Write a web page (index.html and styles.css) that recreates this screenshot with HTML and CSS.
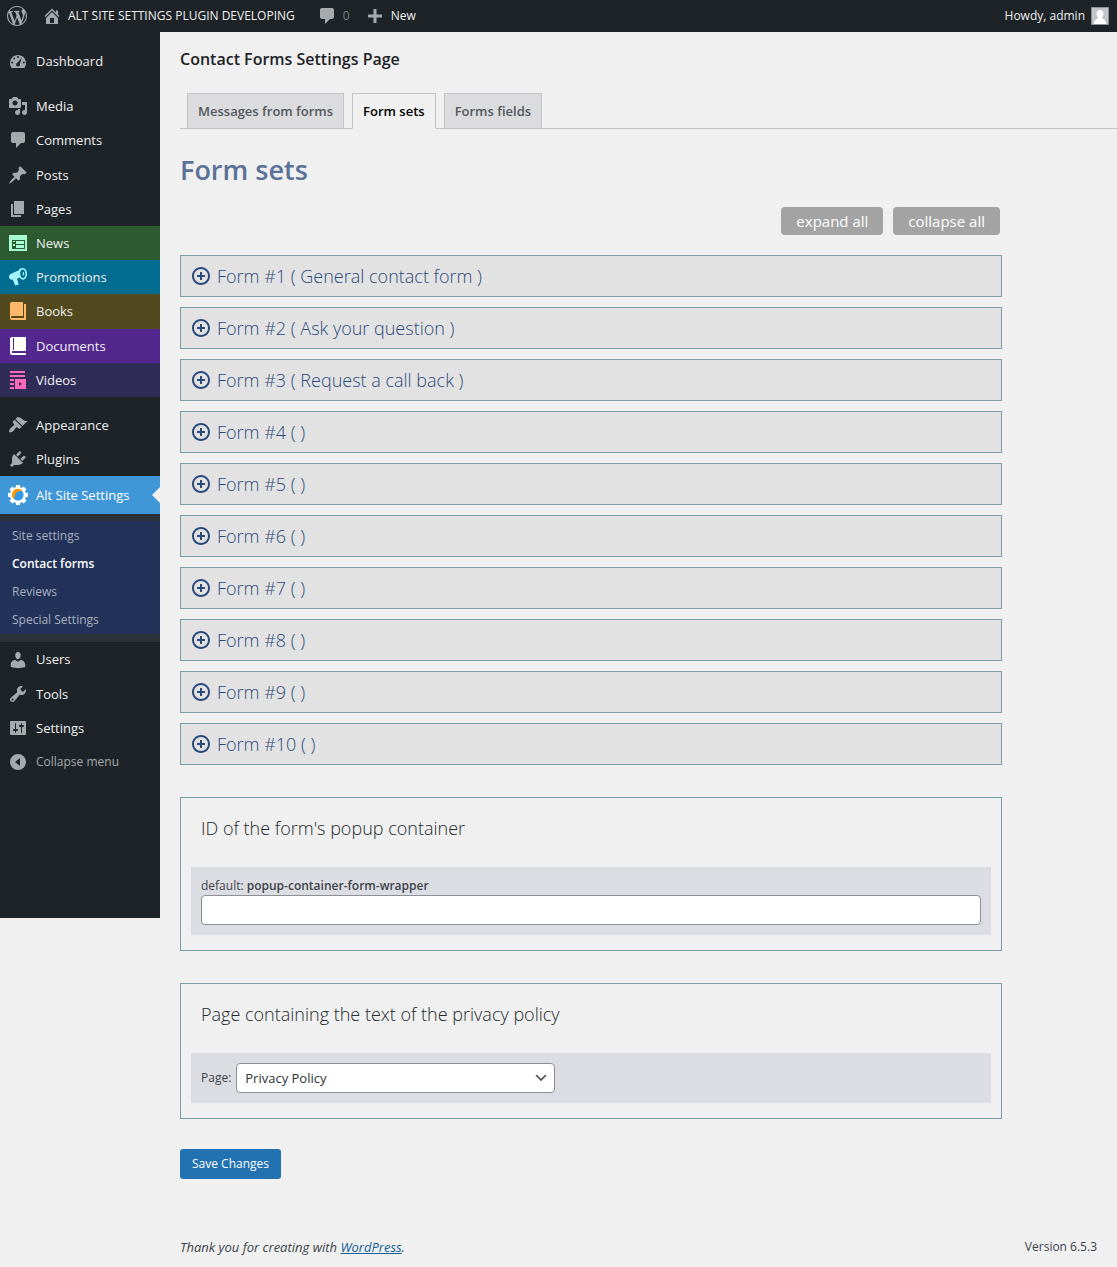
FILE: index.html
```html
<!DOCTYPE html>
<html lang="en">
<head>
<meta charset="utf-8">
<meta name="viewport" content="width=device-width, initial-scale=1">
<title>Contact Forms Settings Page</title>
<link rel="stylesheet" href="styles.css">
</head>
<body>
<svg class="sprite" aria-hidden="true">
  <symbol id="i-insert" viewBox="0 0 20 20"><path d="M10 1c-5 0-9 4-9 9s4 9 9 9 9-4 9-9-4-9-9-9zm0 16c-3.900 0-7-3.100-7-7s3.100-7 7-7 7 3.100 7 7-3.100 7-7 7zm1-11H9v3H6v2h3v3h2v-3h3V9h-3V6z"/></symbol>
  <symbol id="i-comment" viewBox="0 0 20 20"><path d="M5 2h10c1.100 0 2 .9 2 2v7c0 1.100-.9 2-2 2h-2l-5 5v-5H5c-1.100 0-2-.9-2-2V4c0-1.100.9-2 2-2z"/></symbol>
</svg>

<header class="topbar">
  <a class="topbar-item" href="#" aria-label="About WordPress"><svg class="icon" viewBox="0 0 20 20"><path d="M20 10c0-5.510-4.490-10-10-10C4.480 0 0 4.490 0 10c0 5.520 4.480 10 10 10 5.510 0 10-4.480 10-10zM7.780 15.370L4.370 6.220c.55-.02 1.170-.08 1.170-.08.5-.06.44-1.130-.06-1.110 0 0-1.450.11-2.370.11-.18 0-.37 0-.58-.01C4.120 2.690 6.870 1.110 10 1.110c2.330 0 4.450.87 6.050 2.340-.68-.11-1.650.39-1.650 1.580 0 .74.45 1.360.9 2.100.35.61.55 1.360.55 2.460 0 1.490-1.400 5-1.400 5l-3.030-8.370c.54-.02.82-.17.82-.17.5-.05.44-1.250-.06-1.220 0 0-1.440.12-2.380.12-.87 0-2.330-.12-2.330-.12-.5-.03-.56 1.200-.06 1.220l.92.08 1.260 3.410zM17.410 10c.24-.64.74-1.870.43-4.250.7 1.290 1.050 2.710 1.050 4.250 0 3.290-1.730 6.240-4.400 7.780.97-2.590 1.940-5.200 2.920-7.780zM6.100 18.090C3.120 16.650 1.110 13.530 1.110 10c0-1.300.23-2.480.72-3.590C3.250 10.300 4.670 14.200 6.100 18.090zm4.030-6.630l2.580 6.980c-.86.29-1.760.45-2.710.45-.79 0-1.570-.11-2.290-.33.81-2.380 1.620-4.740 2.420-7.100z"/></svg></a>
  <a class="topbar-item site" href="#"><svg class="icon" viewBox="0 0 20 20"><path d="M16 8.500l1.530 1.530-1.060 1.060L10 4.600l-6.470 6.500-1.060-1.070L10 2.500l4 4v-2h2v4zm-6-2.460l6 5.990V18H4v-5.970zM12 17v-5H8v5h4z"/></svg>ALT SITE SETTINGS PLUGIN DEVELOPING</a>
  <a class="topbar-item muted" href="#"><svg class="icon"><use href="#i-comment"/></svg>0</a>
  <a class="topbar-item" href="#"><svg class="icon" viewBox="0 0 20 20"><path d="M17 8.500v3h-5.500V17h-3v-5.500H3v-3h5.500V3h3v5.500z"/></svg>New</a>
  <a class="topbar-item account" href="#">Howdy, admin<svg class="avatar" viewBox="0 0 18 18"><path fill="#8c8f94" d="M0 0h18v18H0z"/><path fill="#c3c4c7" d="M1 1h16v16H1z"/><path fill="#fff" d="M9 3c2.300 0 3.500 1.600 3.500 3.800 0 1.700-.8 3-1.500 3.600v1.100c2.500.5 4 2 4.200 5.500H2.800c.2-3.500 1.700-5 4.200-5.500v-1.100C6.300 9.800 5.500 8.500 5.500 6.800 5.500 4.600 6.700 3 9 3z"/></svg></a>
</header>

<div class="shell">
  <nav class="sidebar" aria-label="Main menu">
    <ul class="menu">
      <li><a href="#"><svg class="icon" viewBox="0 0 20 20"><path fill-rule="evenodd" d="M3.760 17h12.480c1.100-1.370 1.760-3.110 1.760-5 0-4.420-3.580-8-8-8s-8 3.580-8 8c0 1.890.66 3.630 1.760 5zM10 5a1 1 0 1 1 0 2 1 1 0 0 1 0-2zM6.200 6.500a1 1 0 1 1 0 2 1 1 0 0 1 0-2zM4.200 10.500a1 1 0 1 1 0 2 1 1 0 0 1 0-2zM15.800 10.500a1 1 0 1 1 0 2 1 1 0 0 1 0-2zM14 6.300l-2.100 6.500c.5 1.500-.4 2.700-1.900 2.700-1.300 0-2.200-1.300-1.800-2.500.2-.7.8-1.200 1.500-1.400z"/></svg>Dashboard</a></li>
      <li class="gap"><a href="#"><svg class="icon" viewBox="0 0 20 20"><path d="M13 11V4c0-.55-.45-1-1-1h-1.670L9 1H5L3.670 3H2c-.55 0-1 .45-1 1v7c0 .55.45 1 1 1h10c.55 0 1-.45 1-1zM7 4.500c1.380 0 2.500 1.120 2.500 2.500S8.380 9.500 7 9.500 4.500 8.380 4.500 7 5.620 4.500 7 4.500zM14 6h5v10.500c0 1.380-1.120 2.500-2.500 2.500S14 17.880 14 16.500s1.120-2.500 2.500-2.500c.17 0 .34.02.5.05V9h-3V6zm-4 8.050V13h2v3.500c0 1.380-1.120 2.500-2.500 2.500S7 17.880 7 16.500 8.120 14 9.500 14c.17 0 .34.02.5.05z"/></svg>Media</a></li>
      <li><a href="#"><svg class="icon"><use href="#i-comment"/></svg>Comments</a></li>
      <li><a href="#"><svg class="icon" viewBox="0 0 20 20"><path d="M10.440 3.020l1.820-1.820 6.360 6.350-1.830 1.820c-1.050-.68-2.480-.57-3.410.36l-.75.75c-.92.93-1.040 2.350-.35 3.410l-1.830 1.820-2.410-2.410-2.800 2.790c-.42.42-3.380 2.710-3.800 2.290s1.860-3.390 2.280-3.810l2.790-2.790L4.100 9.360l1.830-1.820c1.050.69 2.480.57 3.400-.36l.75-.75c.93-.92 1.050-2.350.36-3.410z"/></svg>Posts</a></li>
      <li><a href="#"><svg class="icon" viewBox="0 0 20 20"><path d="M6 15V2h10v13H6zm-1 1h8v2H3V5h2v11z"/></svg>Pages</a></li>
      <li><a class="news" href="#"><svg class="icon" viewBox="0 0 20 20"><path fill-rule="evenodd" d="M1 2h18v16H1zM4 7v9h13V7zM5 8h2v1H5zm3 0h8v3H8zm-3 3h2v2H5zm3 1h8v3H8z"/></svg>News</a></li>
      <li><a class="promotions" href="#"><svg class="icon" viewBox="0 0 20 20"><path fill-rule="evenodd" d="M14 1c2.700-.5 5 2 5 5.800 0 3.300-1.600 5.700-3.800 5.900-1.400.1-2.600-.8-3.400-2.200L9 11.700l1.800 5.800-3.600 1-2.400-5.800C2.400 12.900 1 11.700 1 10c0-1.500.8-2.600 2-3.200l7.500-3.300C11.300 2.200 12.500 1.200 14 1zm.6 1.500c-1.700.2-2.700 2.200-2.400 4.700.3 2.400 1.500 4 3 3.800 1.500-.2 2.500-2.100 2.200-4.700-.3-2.400-1.500-4-2.800-3.800zm.2 2.300c1 .1 1.400 1 1.400 2s-.5 1.900-1.500 2z"/></svg>Promotions</a></li>
      <li><a class="books" href="#"><svg class="icon" viewBox="0 0 20 20"><path d="M4 1h11v14H4c-.6 0-1 .4-1 1s.4 1 1 1h12V3h2v16H4c-1.100 0-2-.9-2-2V3c0-1.100.9-2 2-2z"/></svg>Books</a></li>
      <li><a class="documents" href="#"><svg class="icon" viewBox="0 0 20 20"><path fill-rule="evenodd" d="M4 1h14v14H4.500c-1 0-1 2 0 2H18v2H4c-1.100 0-2-.9-2-2V3c0-1.100.9-2 2-2zm1 1v12h1V2z"/></svg>Documents</a></li>
      <li><a class="videos" href="#"><svg class="icon" viewBox="0 0 20 20"><path fill-rule="evenodd" d="M2 1h15v2H2zm0 4h15v2H2zm0 4h4v2H2zm0 4h4v2H2zm0 4h4v2H2zM7 9h11v10H7zm4 3v4l3-2z"/></svg>Videos</a></li>
      <li class="gap"><a href="#"><svg class="icon" viewBox="0 0 20 20"><path d="M14.480 11.060L7.410 3.990l1.500-1.500c.5-.56 2.300-.47 3.510.32 1.210.8 1.430 1.280 2.910 2.100 1.180.64 2.450 1.260 4.450.85zm-.71.71L6.700 4.700 4.930 6.470c-.39.39-.39 1.020 0 1.410l1.060 1.060c.39.39.39 1.030 0 1.420-.6.6-1.430 1.110-2.210 1.690-.35.26-.7.53-1.010.84C1.430 14.230.4 16.080 1.400 17.070c.99 1 2.840-.03 4.180-1.360.31-.31.58-.66.85-1.020.57-.78 1.080-1.610 1.690-2.210.39-.39 1.020-.39 1.410 0l1.060 1.060c.39.39 1.020.39 1.410 0z"/></svg>Appearance</a></li>
      <li><a href="#"><svg class="icon" viewBox="0 0 20 20"><path d="M13.110 4.360L9.870 7.600 8 5.730l3.240-3.240c.35-.34 1.050-.2 1.560.32.52.51.66 1.210.31 1.550zm-8 1.770l.91-1.120 9.010 9.010-1.190.84c-.71.71-2.630 1.160-3.820 1.160H6.140L4.900 17.260c-.59.59-1.540.59-2.120 0-.59-.58-.59-1.530 0-2.120l1.240-1.240v-3.880c0-1.130.4-3.190 1.090-3.890zm7.260 3.970l3.240-3.240c.34-.35 1.040-.21 1.550.31.52.51.66 1.210.31 1.550l-3.240 3.250z"/></svg>Plugins</a></li>
      <li>
        <a class="current" href="#"><svg class="icon" viewBox="0 0 20 20"><g fill="#fff"><circle cx="10" cy="10" r="8"/><path d="M8 0h4l.6 4H7.400zM8 20h4l.6-4H7.400zM0 8v4l4 .6V7.400zM20 8v4l-4 .6V7.400z"/><path d="M8 0h4l.6 4H7.400zM8 20h4l.6-4H7.400zM0 8v4l4 .6V7.400zM20 8v4l-4 .6V7.400z" transform="rotate(45 10 10)"/></g><circle cx="10" cy="10" r="5.600" fill="#2f9bea"/><path fill="#ff9800" d="M5.400 13.600A6 6 0 0 1 14.600 5.800C10 6 7 7.500 7 11c0 1-.5 2-1.600 2.600z"/></svg>Alt Site Settings</a>
        <ul class="submenu">
          <li><a href="#">Site settings</a></li>
          <li><a class="active" href="#" aria-current="page">Contact forms</a></li>
          <li><a href="#">Reviews</a></li>
          <li><a href="#">Special Settings</a></li>
        </ul>
      </li>
      <li><a href="#"><svg class="icon" viewBox="0 0 20 20"><path d="M10 9.250c-2.270 0-2.730-3.440-2.730-3.440C7 4.020 7.820 2 9.970 2c2.160 0 2.980 2.020 2.710 3.810 0 0-.41 3.440-2.680 3.440zm0 2.570L12.720 10c2.390 0 4.520 2.330 4.520 4.530v2.490s-3.650 1.130-7.240 1.130c-3.650 0-7.240-1.130-7.240-1.130v-2.490c0-2.250 1.940-4.480 4.470-4.480z"/></svg>Users</a></li>
      <li><a href="#"><svg class="icon" viewBox="0 0 20 20"><path d="M16.680 9.770c-1.340 1.340-3.300 1.670-4.950.99l-5.410 6.520c-.99.99-2.590.99-3.580 0s-.99-2.590 0-3.570l6.520-5.420c-.68-1.650-.35-3.610.99-4.950 1.280-1.280 3.120-1.620 4.720-1.060l-2.890 2.890 2.820 2.820 2.860-2.870c.53 1.580.18 3.390-1.080 4.650zM3.810 16.210c.4.39 1.040.39 1.430 0 .4-.4.4-1.040 0-1.430-.39-.4-1.030-.4-1.430 0-.39.39-.39 1.030 0 1.430z"/></svg>Tools</a></li>
      <li><a href="#"><svg class="icon" viewBox="0 0 20 20"><path d="M18 16V4c0-.55-.45-1-1-1H3c-.55 0-1 .45-1 1v12c0 .55.45 1 1 1h14c.55 0 1-.45 1-1zM8 11h1c.55 0 1 .45 1 1s-.45 1-1 1H8v1.500c0 .28-.22.5-.5.5s-.5-.22-.5-.5V13H6c-.55 0-1-.45-1-1s.45-1 1-1h1V5.500c0-.28.22-.5.5-.5s.5.22.5.5V11zm5-2h-1c-.55 0-1-.45-1-1s.45-1 1-1h1V5.500c0-.28.22-.5.5-.5s.5.22.5.5V7h1c.55 0 1 .45 1 1s-.45 1-1 1h-1v5.500c0 .28-.22.5-.5.5s-.5-.22-.5-.5V9z"/></svg>Settings</a></li>
      <li><button class="collapse" type="button"><svg class="icon" viewBox="0 0 20 20"><path fill-rule="evenodd" d="M10 2a8 8 0 1 1 0 16 8 8 0 0 1 0-16zm2 4l-5 4 5 4z"/></svg>Collapse menu</button></li>
    </ul>
  </nav>

  <div class="content">
    <main>
      <h1>Contact Forms Settings Page</h1>
      <nav class="tabs" aria-label="Sections">
        <a href="#">Messages from forms</a>
        <a class="active" href="#" aria-current="page">Form sets</a>
        <a href="#">Forms fields</a>
      </nav>
      <form class="settings">
        <h2>Form sets</h2>
        <div class="tools">
          <button type="button">expand all</button>
          <button type="button">collapse all</button>
        </div>
        <div class="forms">
          <button type="button"><svg class="icon"><use href="#i-insert"/></svg>Form #1 ( General contact form )</button>
          <button type="button"><svg class="icon"><use href="#i-insert"/></svg>Form #2 ( Ask your question )</button>
          <button type="button"><svg class="icon"><use href="#i-insert"/></svg>Form #3 ( Request a call back )</button>
          <button type="button"><svg class="icon"><use href="#i-insert"/></svg>Form #4 ( )</button>
          <button type="button"><svg class="icon"><use href="#i-insert"/></svg>Form #5 ( )</button>
          <button type="button"><svg class="icon"><use href="#i-insert"/></svg>Form #6 ( )</button>
          <button type="button"><svg class="icon"><use href="#i-insert"/></svg>Form #7 ( )</button>
          <button type="button"><svg class="icon"><use href="#i-insert"/></svg>Form #8 ( )</button>
          <button type="button"><svg class="icon"><use href="#i-insert"/></svg>Form #9 ( )</button>
          <button type="button"><svg class="icon"><use href="#i-insert"/></svg>Form #10 ( )</button>
        </div>
        <section class="box">
          <h3>ID of the form's popup container</h3>
          <div class="field stacked">
            <label for="popup-id">default: <b>popup-container-form-wrapper</b></label>
            <input id="popup-id" type="text">
          </div>
        </section>
        <section class="box">
          <h3>Page containing the text of the privacy policy</h3>
          <div class="field">
            <label for="policy-page">Page:</label>
            <span class="select"><select id="policy-page"><option>Privacy Policy</option></select><svg viewBox="0 0 20 20" aria-hidden="true"><path d="M5 6l5 5 5-5 2 1-7 7-7-7z"/></svg></span>
          </div>
        </section>
        <button class="save" type="submit">Save Changes</button>
      </form>
    </main>
    <footer>
      <i>Thank you for creating with <a href="#">WordPress</a>.</i>
      <span>Version 6.5.3</span>
    </footer>
  </div>
</div>
</body>
</html>
```
FILE: styles.css
```css
* { box-sizing: border-box; }

body {
  margin: 0;
  min-height: 100vh;
  display: flex;
  flex-direction: column;
  background: #f0f0f0;
  color: #3c434a;
  font: 12px/18px "Open Sans", "Noto Sans", sans-serif;
}

button, input, select { font: inherit; color: inherit; }
button { cursor: pointer; border: 0; }
h1, h2, h3 { margin: 0; }
.sprite { position: absolute; width: 0; height: 0; }
.icon { width: 20px; height: 20px; flex: none; fill: currentColor; }

/* Top bar */
.topbar {
  display: flex;
  gap: 15px;
  height: 32px;
  padding: 0 8px 0 7px;
  background: #1d2327;
}
.topbar-item {
  display: flex;
  align-items: center;
  gap: 6px;
  color: #f0f0f1;
  text-decoration: none;
  white-space: nowrap;
}
.topbar-item .icon { fill: #a7aaad; }
.topbar-item.muted { color: #7c8084; }
.site { padding-right: 7px; }
.account { margin-left: auto; }
.avatar { width: 18px; height: 18px; }

/* Sidebar */
.shell { display: flex; flex: 1; }
.sidebar {
  flex: none;
  align-self: flex-start;
  width: 160px;
  padding: 12px 0 139px;
  background: #1d2327;
}
.menu, .submenu { margin: 0; padding: 0; list-style: none; }
.menu a, .collapse {
  display: flex;
  align-items: center;
  gap: 8px;
  width: 100%;
  padding: 8px;
  background: none;
  color: #f0f0f1;
  font-size: 13px;
  line-height: 1.4;
  text-decoration: none;
}
.menu .icon { margin: -1px 0; fill: #a7aaad; }
.menu .gap { padding-top: 11px; }
.menu .collapse { color: #a7aaad; font-size: 12px; line-height: 18px; }
.menu .news { background: #2d5a2f; }
.news .icon { fill: #a6fbd3; }
.menu .promotions { background: #006c8f; }
.promotions .icon { fill: #a3f6ff; }
.menu .books { background: #524a1e; }
.books .icon { fill: #ffb968; }
.menu .documents { background: #54278f; }
.documents .icon { fill: #fff; }
.menu .videos { background: #2f2c57; }
.videos .icon { fill: #ff69b9; }
.menu .current {
  position: relative;
  padding-block: 10px;
  background: #3f97d8;
  color: #fff;
}
.current::after {
  content: "";
  position: absolute;
  right: 0;
  top: 50%;
  margin-top: -8px;
  border: 8px solid transparent;
  border-right-color: #f0f0f0;
  border-left: 0;
}
.submenu {
  border: solid #2c3338;
  border-width: 7px 0 8px;
  padding-top: 1px;
  background: #223259;
}
.menu .submenu a {
  padding: 5px 12px;
  color: #a9b0bf;
  font-size: 12px;
  line-height: 18px;
}
.menu .submenu .active { color: #fff; font-weight: 600; }

/* Content */
.content {
  flex: 1;
  min-width: 0;
  display: flex;
  flex-direction: column;
  justify-content: space-between;
  padding-left: 20px;
}
h1 {
  padding: 16px 0 23px;
  color: #1d2327;
  font-size: 16px;
  font-weight: 600;
  line-height: 22px;
}
.tabs {
  display: flex;
  gap: 8px;
  padding-left: 7px;
  border-bottom: 1px solid #c3c4c7;
}
.tabs a {
  margin-bottom: -1px;
  padding: 5px 10px;
  border: 1px solid #c3c4c7;
  background: #dcdcde;
  color: #50575e;
  font-size: 13px;
  font-weight: 600;
  line-height: 24px;
  text-decoration: none;
}
.tabs .active {
  border-bottom-color: #f0f0f0;
  background: #f0f0f0;
  color: #000;
}
.settings { max-width: 822px; }
h2 {
  padding: 22px 0 18px;
  color: #5a7297;
  font-size: 27px;
  font-weight: 600;
  line-height: 38px;
}
.tools {
  display: flex;
  justify-content: flex-end;
  gap: 10px;
  padding: 0 2px 20px;
}
.tools button {
  padding: 2px 15px;
  border-radius: 4px;
  background: #a3a3a3;
  color: #fff;
  font-size: 15px;
  line-height: 24px;
}
.forms { display: grid; gap: 10px; margin-bottom: 32px; }
.forms button {
  display: flex;
  align-items: center;
  gap: 6px;
  padding: 8px 10px;
  border: 1px solid #7a9ea5;
  background: #e2e2e2;
  color: #2b4a7c;
  font-size: 18px;
  font-weight: 300;
  line-height: 24px;
  text-align: left;
}
.box {
  margin-bottom: 32px;
  padding: 15px 10px;
  border: 1px solid #7a9ea5;
}
.box:last-of-type { margin-bottom: 30px; }
h3 {
  padding: 0 10px 24px;
  color: #23282d;
  font-size: 18px;
  font-weight: 300;
  line-height: 30px;
}
.field {
  display: flex;
  align-items: center;
  gap: 5px;
  padding: 10px;
  background: #dcdde3;
}
.field b { font-weight: 600; }
.stacked { display: grid; gap: 0; }
input, select {
  height: 30px;
  border: 1px solid #8c8f94;
  border-radius: 4px;
  background: #fff;
  color: #2c3338;
  font-size: 13px;
}
.select { display: grid; flex: 0 1 319px; }
.select > * { grid-area: 1 / 1; }
.select select { padding: 0 8px; appearance: none; }
.select svg {
  place-self: center end;
  width: 16px;
  height: 16px;
  margin-right: 6px;
  fill: #555;
  pointer-events: none;
}
.save {
  padding: 0 12px;
  border-radius: 3px;
  background: #2271b1;
  color: #fff;
  line-height: 30px;
}
footer {
  display: flex;
  justify-content: space-between;
  padding: 10px 20px 11px 0;
}
footer i { font-size: 13px; }
footer a { color: #135e96; }
```
